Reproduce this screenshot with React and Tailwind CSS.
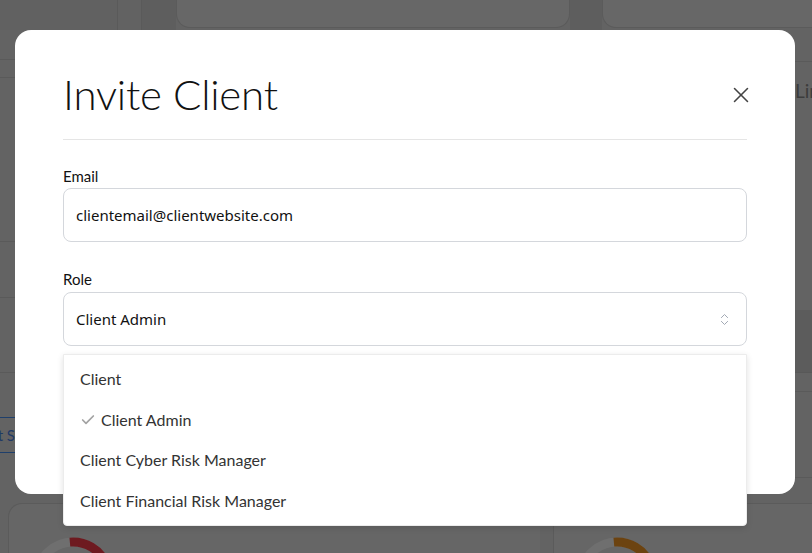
import React from 'react';
import { X, Check, ChevronsUpDown } from 'lucide-react';

const roles = ['Client', 'Client Admin', 'Client Cyber Risk Manager', 'Client Financial Risk Manager'];

// small dimmed donut used by the dashboard cards behind the dialog
const Donut = ({ color, sweep }) => {
  const r = 36;
  const c = 2 * Math.PI * r;
  return (
    <svg width="90" height="90" viewBox="0 0 90 90">
      <circle cx="45" cy="45" r={r} fill="none" stroke="#6f6f6f" strokeWidth="9" />
      <circle
        cx="45"
        cy="45"
        r={r}
        fill="none"
        stroke={color}
        strokeWidth="9"
        strokeDasharray={`${c * sweep} ${c}`}
        transform="rotate(-95 45 45)"
      />
    </svg>
  );
};

const App = () => {
  const selected = 'Client Admin';

  return (
    <div className="relative w-[812px] h-[553px] overflow-hidden bg-[#636363] font-['Lato',sans-serif]">
      {/* --- dashboard behind the backdrop --- */}
      <div className="flex flex-col h-full">
        <div className="flex h-[30px] shrink-0">
          <div className="w-[118px] border-r border-[#5a5a5a] bg-[#616161]" />
          <div className="w-[24px] border-r border-[#5a5a5a] bg-[#626262]" />
          <div className="w-[34px] bg-[#5e5e5e]" />
          <div className="w-[394px] h-[28px] rounded-b-[14px] border border-t-0 border-[#5b5b5b] bg-[#676767]" />
          <div className="w-[32px] bg-[#5e5e5e]" />
          <div className="flex-1 h-[28px] rounded-bl-[14px] border-l border-b border-[#5b5b5b] bg-[#676767]" />
        </div>

        <div className="flex h-[473px] shrink-0">
          <div className="w-[15px] flex flex-col">
            <div className="h-[30px] border-b border-[#5a5a5a]" />
            <div className="h-[18px] border-b border-[#5a5a5a]" />
            <div className="h-[164px] border-b border-[#5a5a5a]" />
            <div className="h-[56px] border-b border-[#5a5a5a]" />
            <div className="h-[75px] border-b border-[#5a5a5a]" />
            <div className="h-[44px]" />
            <div className="h-[36px] border-y border-[#1f3f6b] flex items-center justify-end overflow-hidden whitespace-nowrap text-[15px] text-[#1f3a66] leading-none">
              <span className="shrink-0">t S</span>
            </div>
          </div>
          <div className="flex-1" />
          <div className="w-[17px] flex flex-col">
            <div className="h-[32px] border-b border-[#5a5a5a]" />
            <div className="h-[56px] flex items-center overflow-hidden text-[19px] text-[#3c3c3c] leading-none whitespace-nowrap">Lin</div>
            <div className="h-[192px]" />
            <div className="h-[63px] bg-[#5c5c5c] border-b border-[#585858]" />
            <div className="h-[19px] border-b border-[#5a5a5a]" />
            <div className="h-[86px] border-b border-[#5a5a5a]" />
          </div>
        </div>

        <div className="flex flex-1 pl-[8px] gap-[13px]">
          <div className="w-[532px] rounded-tl-[14px] border-l border-t border-[#5b5b5b] bg-[#666666] pl-[19px] pt-[29px]">
            <Donut color="#6e1a20" sweep={0.2} />
          </div>
          <div className="flex-1 border-l border-t border-[#5b5b5b] bg-[#666666] pl-[18px] pt-[29px]">
            <Donut color="#6c4310" sweep={0.2} />
          </div>
        </div>
      </div>

      {/* --- invite dialog --- */}
      <div className="absolute left-[15px] top-[30px] w-[780px] h-[464px] rounded-[16px] bg-white px-[48px] pt-[38px]">
        <div className="flex items-center justify-between border-b border-[#e5e5e5] pb-[19px]">
          <h1 className="text-[42px] font-light text-[#111] leading-[52px] tracking-[-0.2px]">Invite Client</h1>
          <button className="text-[#444] mr-[-7px] mt-[2px]">
            <X size={26} strokeWidth={1.4} />
          </button>
        </div>

        <label className="block mt-[27px] text-[15px] text-[#111] leading-[18px]">Email</label>
        <div className="mt-[3px] h-[54px] rounded-[8px] border border-[#d4d7dc] flex items-center px-[12px] font-['Noto_Sans',sans-serif] text-[15px] text-[#111]">
          clientemail@clientwebsite.com
        </div>

        <label className="block mt-[28px] text-[15px] text-[#111] leading-[18px]">Role</label>
        <div className="relative mt-[4px]">
          <div className="h-[54px] rounded-[8px] border border-[#d4d7dc] flex items-center justify-between px-[12px] font-['Noto_Sans',sans-serif] text-[15px] text-[#111]">
            <span>{selected}</span>
            <ChevronsUpDown size={15} strokeWidth={1.5} className="text-[#9ca3af] mr-[2px]" />
          </div>

          <ul className="absolute left-0 right-0 top-[62px] h-[172px] rounded-b-[4px] border border-[#ececec] bg-white shadow-[0_2px_6px_rgba(0,0,0,0.12)] pt-[4px] z-10">
            {roles.map((role) => (
              <li key={role} className="h-[40.5px] flex items-center px-[16px] text-[16px] text-[#333]">
                {role === selected && (
                  <Check size={16} strokeWidth={2.6} className="text-[#a3a3a3] mr-[5px]" />
                )}
                {role}
              </li>
            ))}
          </ul>
        </div>
      </div>
    </div>
  );
};

export default App;
